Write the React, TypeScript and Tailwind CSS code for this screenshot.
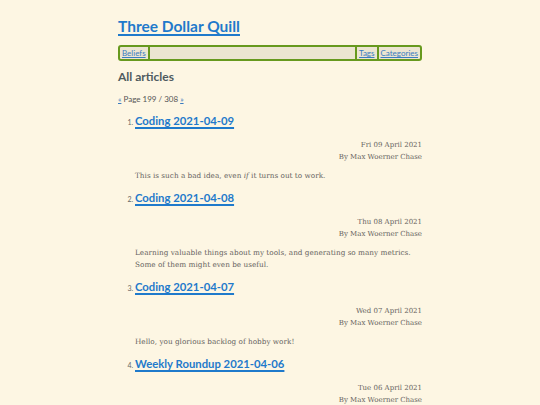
import React from "react";

const items = [
  {
    title: "Coding 2021-04-09",
    date: "Fri 09 April 2021",
    summary: (
      <>
        This is such a bad idea, even <em>if</em> it turns out to work.
      </>
    ),
  },
  {
    title: "Coding 2021-04-08",
    date: "Thu 08 April 2021",
    summary: (
      <>
        Learning valuable things about my tools, and generating so many metrics.
        Some of them might even be useful.
      </>
    ),
  },
  {
    title: "Coding 2021-04-07",
    date: "Wed 07 April 2021",
    summary: <>Hello, you glorious backlog of hobby work!</>,
  },
  {
    title: "Weekly Roundup 2021-04-06",
    date: "Tue 06 April 2021",
    summary: <>Looking back on the week.</>,
  },
];

const head = { fontFamily: 'Lato, "Noto Sans", sans-serif' };
const body = { fontFamily: '"DejaVu Serif", "Liberation Serif", serif' };

export default function App() {
  return (
    <div className="h-screen overflow-hidden bg-[#fdf6e3] text-[#666360]">
      <div className="mx-auto w-[304px] pt-[13px]">
        <h1
          className="text-[15.5px] font-bold leading-[26px] text-[#1f7acb]"
          style={head}
        >
          <a href="#" className="underline decoration-[1.5px] underline-offset-2">
            Three Dollar Quill
          </a>
        </h1>
        <nav
          className="mt-[6px] flex h-[16px] items-center rounded-[3px] border-2 border-[#67991e] bg-[#ece5d1] text-[8px] leading-[12px] text-[#3a7cc0]"
          style={head}
        >
          <a href="#" className="border-r-2 border-[#67991e] px-[2px] underline">
            Beliefs
          </a>
          <div className="flex-1" />
          <a href="#" className="border-l-2 border-[#67991e] px-[2px] underline">
            Tags
          </a>
          <a href="#" className="border-l-2 border-[#67991e] px-[2px] underline">
            Categories
          </a>
        </nav>
        <h2
          className="mt-[8px] text-[12px] font-bold leading-[16px] text-[#4f5b60]"
          style={head}
        >
          All articles
        </h2>
        <p className="mt-[8px] text-[8px] leading-[12px] text-[#555]" style={head}>
          <a href="#" className="text-[#3a7cc0] underline">
            «
          </a>{" "}
          Page 199 / 308{" "}
          <a href="#" className="text-[#3a7cc0] underline">
            »
          </a>
        </p>
        <ol className="mt-[8px] list-decimal pl-[17px] marker:text-[7px] marker:text-[#666]">
          {items.map((it) => (
            <li key={it.title} className="pb-[8px]" style={head}>
              <h3 className="text-[11.3px] font-bold leading-[16px] text-[#1f7acb]">
                <a href="#" className="underline decoration-[1.5px] underline-offset-2">
                  {it.title}
                </a>
              </h3>
              <div
                className="mt-[10px] text-right text-[7px] leading-[12px] text-[#666360]"
                style={body}
              >
                <div>{it.date}</div>
                <div>By Max Woerner Chase</div>
              </div>
              <p
                className="mt-[7px] pr-[8px] text-[7.3px] leading-[12px] text-[#666360]"
                style={body}
              >
                {it.summary}
              </p>
            </li>
          ))}
        </ol>
      </div>
    </div>
  );
}
